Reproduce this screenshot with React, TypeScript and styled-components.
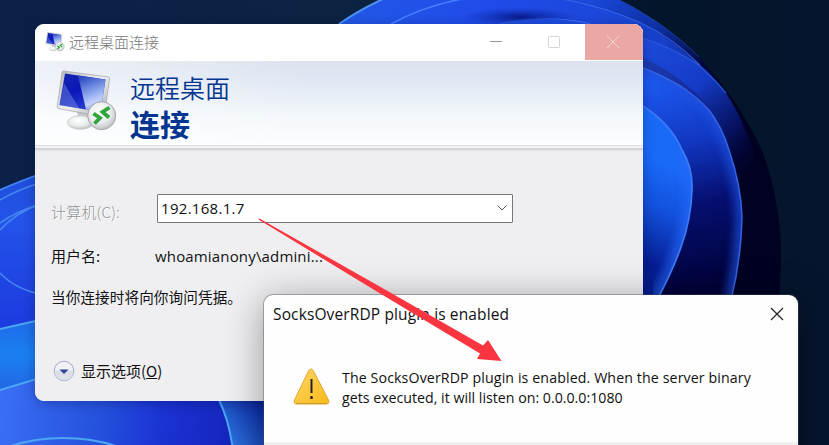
import React from "react";
import styled, { createGlobalStyle } from "styled-components";

const Global = createGlobalStyle`
  html, body { margin: 0; padding: 0; overflow: hidden; }
  * { box-sizing: border-box; }
`;

const latin = `"Open Sans", "Noto Sans CJK SC", sans-serif`;
const cjk = `"Noto Sans CJK SC", "Open Sans", sans-serif`;

const Desktop = styled.main`
  position: relative;
  width: 829px;
  height: 445px;
  overflow: hidden;
  background: #06172e;
  font-family: ${cjk};
`;

const Wallpaper = styled.svg`
  position: absolute;
  inset: 0;
  display: block;
`;

const RdpWindow = styled.section`
  position: absolute;
  left: 35px;
  top: 24px;
  width: 608px;
  height: 377px;
  border-radius: 9px;
  overflow: hidden;
  background: #efeff1;
  display: flex;
  flex-direction: column;
  box-shadow: 0 2px 12px rgba(0, 10, 50, 0.3);
`;

const TitleBar = styled.header`
  height: 37px;
  flex: none;
  background: #fff;
  display: flex;
  align-items: flex-start;
`;

const TitleIcon = styled.div`
  width: 20px;
  height: 22px;
  margin: 7px 4px 0 10px;
`;

const Title = styled.div`
  flex: 1;
  font-size: 15px;
  font-weight: 300;
  line-height: 35px;
  color: #777;
`;

const CaptionButton = styled.button<{ $danger?: boolean }>`
  width: 58px;
  height: 36px;
  border: 0;
  padding: ${(p) => (p.$danger ? "0 2px 0 0" : "0 4px 0 0")};
  display: grid;
  place-items: center;
  background: ${(p) => (p.$danger ? "#eaa7a3" : "transparent")};
`;

const Banner = styled.div`
  height: 85px;
  flex: none;
  display: flex;
  background: linear-gradient(90deg, rgba(255,255,255,.5), rgba(255,255,255,0) 45%),
    linear-gradient(#dce3ec 0, #dfe6f3 18%, #e9eff6 45%, #f4f8fb 65%, #fbfdfe 100%);
  border-bottom: 1px solid #dcdcde;
`;

const BannerIcon = styled.div`
  margin: 8px 0 0 20px;
  width: 63px;
  height: 65px;
`;

const BannerText = styled.div`
  margin: 9px 0 0 12px;
  color: #043590;
`;

const BannerLine = styled.div<{ $bold?: boolean }>`
  font-size: ${(p) => (p.$bold ? 30 : 25)}px;
  font-weight: ${(p) => (p.$bold ? 700 : 350)};
  line-height: ${(p) => (p.$bold ? 37 : 35)}px;
`;

const Body = styled.div`
  flex: 1;
  padding: 44px 16px 0;
  display: flex;
  flex-direction: column;
  background: linear-gradient(#f4f4f6 0, #f4f4f6 2px, #d0d0d2 2px, #d8d8da 4px, #ececee 5px, #efeff1 6px);
`;

const Row = styled.div<{ $height: number }>`
  height: ${(p) => p.$height}px;
  display: flex;
  align-items: center;
`;

const Label = styled.label<{ $muted?: boolean }>`
  width: ${(p) => (p.$muted ? 106 : 104)}px;
  font-size: 15px;
  font-weight: ${(p) => (p.$muted ? 300 : 400)};
  letter-spacing: ${(p) => (p.$muted ? 0.2 : 0)}px;
  color: ${(p) => (p.$muted ? "#929294" : "#111")};
  text-shadow: ${(p) => (p.$muted ? "1px 1px #fff" : "none")};
  padding-top: ${(p) => (p.$muted ? 7 : 0)}px;
`;

const Combo = styled.div`
  width: 356px;
  height: 29px;
  border: 1px solid #77777a;
  border-radius: 1px;
  background: #fff;
  display: flex;
  align-items: center;
  justify-content: space-between;
  padding: 0 5px 0 3px;
  font: 400 15px/27px ${latin};
  letter-spacing: 0.3px;
  color: #111;
`;

const UserName = styled.span`
  font: 400 15px/22px ${latin};
  letter-spacing: 0.16px;
  color: #111;
`;

const Notice = styled.div`
  margin-top: 1px;
  font-size: 14.6px;
  line-height: 22px;
  letter-spacing: 0.1px;
  color: #111;
`;

const Options = styled.div`
  margin: 52px 0 0 2px;
  display: flex;
  align-items: center;
  gap: 6px;
  font-size: 15px;
  line-height: 22px;
  letter-spacing: 0;
  color: #111;
  svg { flex: none; }
`;

const Popup = styled.section`
  position: absolute;
  left: 264px;
  top: 295px;
  width: 534px;
  height: 180px;
  border-radius: 9px;
  background: #fefefe;
  font-family: ${latin};
  color: #111;
  box-shadow: 0 0 0 1px rgba(70, 75, 90, 0.4), 0 6px 38px rgba(0, 0, 0, 0.38);
`;

const PopupHeader = styled.header`
  height: 37px;
  margin-bottom: 1px;
  display: flex;
  align-items: center;
  justify-content: space-between;
  padding: 0 14px 0 9px;
  font-size: 15.5px;
  letter-spacing: 0.13px;
`;

const Message = styled.div`
  height: 109px;
  padding: 34px 0 0 29px;
  display: flex;
  gap: 11px;
`;

const MessageText = styled.p`
  margin: 1px 0 0;
  font-size: 14.2px;
  line-height: 20px;
  white-space: nowrap;
`;

const TextLine = styled.span<{ $spacing: number }>`
  display: block;
  letter-spacing: ${(p) => p.$spacing}px;
`;

const PopupFooter = styled.footer`
  height: 33px;
  border-radius: 0 0 9px 9px;
  background: #f0f0f1;
`;

const ArrowOverlay = styled.svg`
  position: absolute;
  left: 256px;
  top: 216px;
`;

function RdpIcon({ id, width, height }: { id: string; width: number; height: number }) {
  return (
    <svg width={width} height={height} viewBox="0 0 63 65">
      <defs>
        <linearGradient id={`${id}s`} x1="0" y1="0" x2=".5" y2="1">
          <stop stopColor="#1626b0" /><stop offset=".5" stopColor="#0a17b8" /><stop offset="1" stopColor="#2a3fd0" />
        </linearGradient>
        <linearGradient id={`${id}g`} x1=".3" y1="0" x2=".6" y2="1">
          <stop stopColor="#2c49c4" /><stop offset=".5" stopColor="#8ea8ee" /><stop offset=".75" stopColor="#c3d2fa" /><stop offset="1" stopColor="#6d8ae6" />
        </linearGradient>
        <linearGradient id={`${id}f`} x1="0" y1="0" x2="1" y2="1">
          <stop stopColor="#b4b5b8" /><stop offset=".5" stopColor="#f0f0f1" /><stop offset="1" stopColor="#a5a7ab" />
        </linearGradient>
        <radialGradient id={`${id}b`} cx=".42" cy=".35" r=".68">
          <stop stopColor="#fff" /><stop offset=".6" stopColor="#e9eaeb" /><stop offset="1" stopColor="#bcbdbf" />
        </radialGradient>
      </defs>
      <path d="M22 42 36 45 34 53 24 52Z" fill="#c7c8cc" />
      <ellipse cx="25.500" cy="53.500" rx="13" ry="6.800" fill={`url(#${id}b)`} stroke="#c0c1c4" strokeWidth=".7" />
      <path d="M8.500 2 53.500 8Q54.800 8.300 54.600 10L49 48 3 39.500Q2 39 2.300 37.500L7 3.500Q7.300 2 8.500 2Z" fill={`url(#${id}f)`} stroke="#a0a2a8" strokeWidth=".7" />
      <path d="m10 4.500 40.500 6L45.500 43 4.500 36Z" fill={`url(#${id}s)`} />
      <path d="m23 6.400 27.500 4.100L45.500 43 31 40.500Z" fill={`url(#${id}g)`} />
      <path d="m9 14 15 25.300L4.500 36Z" fill="#899de9" opacity=".4" />
      <circle cx="46.700" cy="46.700" r="14" fill={`url(#${id}b)`} stroke="#a3a5a9" />
      <path d="m38.500 44.500 6.500 4.500-5.500 5.500M54.500 38.500l-7 4.500 6.500 5.500" fill="none" stroke="#2fa63c" strokeWidth="3.800" />
    </svg>
  );
}

function Bloom() {
  return (
    <Wallpaper width="829" height="445" viewBox="0 0 829 445">
      <defs>
        <linearGradient id="night" x1="0" y1="0" x2="1" y2="0">
          <stop stopColor="#0b2048" /><stop offset=".4" stopColor="#0c2342" /><stop offset=".8" stopColor="#03152b" /><stop offset="1" stopColor="#06152d" />
        </linearGradient>
        <linearGradient id="outer" gradientUnits="userSpaceOnUse" x1="590" y1="0" x2="706" y2="120">
          <stop stopColor="#1b48d8" /><stop offset=".4" stopColor="#0f2fa4" /><stop offset=".75" stopColor="#03083c" /><stop offset="1" stopColor="#010222" />
        </linearGradient>
        <linearGradient id="second" gradientUnits="userSpaceOnUse" x1="560" y1="0" x2="760" y2="170">
          <stop stopColor="#2050e8" /><stop offset=".4" stopColor="#173fc8" /><stop offset=".8" stopColor="#060f62" /><stop offset="1" stopColor="#01022d" stopOpacity="0" />
        </linearGradient>
        <linearGradient id="third" gradientUnits="userSpaceOnUse" x1="645" y1="40" x2="740" y2="160">
          <stop stopColor="#1d4bdc" /><stop offset=".45" stopColor="#143bc6" /><stop offset="1" stopColor="#03083f" stopOpacity="0" />
        </linearGradient>
        <linearGradient id="fourth" gradientUnits="userSpaceOnUse" x1="645" y1="60" x2="740" y2="160">
          <stop stopColor="#1c3caf" /><stop offset=".5" stopColor="#12289a" /><stop offset="1" stopColor="#020430" stopOpacity="0" />
        </linearGradient>
        <linearGradient id="petal" gradientUnits="userSpaceOnUse" x1="660" y1="80" x2="705" y2="290">
          <stop stopColor="#1d5bf2" /><stop offset=".3" stopColor="#1238c4" /><stop offset=".6" stopColor="#050f70" /><stop offset="1" stopColor="#010238" />
        </linearGradient>
        <linearGradient id="core" gradientUnits="userSpaceOnUse" x1="680" y1="170" x2="640" y2="260">
          <stop stopColor="#1a6af8" /><stop offset=".45" stopColor="#1250dc" /><stop offset="1" stopColor="#061d91" />
        </linearGradient>
        <linearGradient id="crown" gradientUnits="userSpaceOnUse" x1="340" y1="0" x2="640" y2="0">
          <stop stopColor="#2358e6" /><stop offset=".5" stopColor="#204bea" /><stop offset="1" stopColor="#1b46d4" />
        </linearGradient>
        <linearGradient id="left" x1="0" y1="0" x2="0" y2="1">
          <stop stopColor="#1f4fd8" /><stop offset=".3" stopColor="#2453ea" /><stop offset="1" stopColor="#1c3ade" />
        </linearGradient>
        <linearGradient id="band" x1="0" y1="0" x2="0" y2="1">
          <stop stopColor="#1f6ae8" /><stop offset=".5" stopColor="#1a80f2" /><stop offset="1" stopColor="#2467e4" />
        </linearGradient>
        <linearGradient id="bottom" gradientUnits="userSpaceOnUse" x1="0" y1="400" x2="230" y2="420">
          <stop stopColor="#3a6ff4" /><stop offset=".45" stopColor="#2450dc" /><stop offset=".7" stopColor="#1b33d4" /><stop offset="1" stopColor="#1526bd" />
        </linearGradient>
        <linearGradient id="wedge" gradientUnits="userSpaceOnUse" x1="226" y1="435" x2="262" y2="405">
          <stop stopColor="#2a70dc" /><stop offset="1" stopColor="#0d2aa6" />
        </linearGradient>
        <radialGradient id="shade"><stop stopColor="#030f70" /><stop offset="1" stopColor="#0a28ac" stopOpacity="0" /></radialGradient>
        <filter id="soft"><feGaussianBlur stdDeviation="4" /></filter>
        <clipPath id="petalClip"><path d="M643 68C657 73 670 80 682 87Q699 99 709 110Q722 127 729 150Q741 185 742 217Q741 260 731 300H643Z" /></clipPath>
        <clipPath id="coreClip"><path d="M643 106Q671 124 682 150Q693 168 692 190Q691 220 681 247Q673 270 657 300H643Z" /></clipPath>
      </defs>
      <path d="M0 0H829V445H0Z" fill="url(#night)" />
      <path d="M560-4H612Q665 22 699 57Q738 99 762 150Q780 200 781 250Q781 275 779 300H560Z" fill="url(#outer)" />
      <path d="M612-4Q665 22 699 57" fill="none" stroke="#1d469e" strokeWidth="1" opacity=".7" />
      <path d="M339 24Q359 10 385-2H557Q602 6 639 22Q672 39 706 70Q742 105 755 160L720 200 640 100V24Z" fill="url(#second)" />
      <path d="M339 24Q359 10 385-2H557Q602 6 639 22V26H339Z" fill="url(#crown)" />
      <path d="M557-2Q602 6 639 22Q672 37 700 65" fill="none" stroke="#3a70f0" strokeWidth="1.200" opacity=".7" />
      <path d="M339 24Q359 10 385-2" fill="none" stroke="#4b93f2" strokeWidth="2" />
      <path d="M391 24Q424 6 462-1M500 24Q545 14 590 24" fill="none" stroke="#477fff" strokeWidth="1.500" />
      <ellipse cx="520" cy="17" rx="58" ry="10" fill="url(#shade)" opacity=".8" />
      <path d="M500 24Q545 14 590 24Z" fill="#1d4de0" />
      <path d="M643 38Q672 48 696 63Q712 76 726 93Q744 120 755 165L735 180 643 80Z" fill="url(#third)" />
      <path d="M643 38Q672 48 696 63Q712 76 726 93" fill="none" stroke="#2c62e4" strokeWidth="1.200" opacity=".8" />
      <path d="M643 58Q671 70 692 90Q730 120 742 170L700 150 643 80Z" fill="url(#fourth)" />
      <g clipPath="url(#petalClip)">
        <path d="M640 60H750V300H640Z" fill="url(#petal)" />
        <path d="M643 68C657 73 670 80 682 87Q699 99 709 110Q722 127 729 150Q741 185 742 217Q741 260 731 300" fill="none" stroke="#1d50dc" strokeWidth="14" opacity=".7" filter="url(#soft)" />
      </g>
      <path d="M643 68C657 73 670 80 682 87Q699 99 709 110Q722 127 729 150Q741 185 742 217Q741 260 731 300" fill="none" stroke="#3363e4" strokeWidth="1.500" />
      <g clipPath="url(#coreClip)">
        <path d="M640 100H700V300H640Z" fill="url(#core)" />
        <path d="M682 150Q693 168 692 190Q691 220 681 247Q673 270 657 300" fill="none" stroke="#2768f5" strokeWidth="16" opacity=".6" filter="url(#soft)" />
      </g>
      <path d="M643 106Q671 124 682 150Q693 168 692 190Q691 220 681 247Q673 270 657 300" fill="none" stroke="#3b7bf8" strokeWidth="1.700" />
      <path d="M0 189Q18 181 40 174V325L0 330Z" fill="url(#left)" />
      <path d="M0 329 40 320V380L0 390Z" fill="url(#band)" />
      <path d="M0 190Q18 182 40 174M0 200Q17 190 40 183M0 223Q15 212 40 204M0 230Q14 214 40 204M0 273Q15 289 40 294" fill="none" stroke="#4386f2" strokeWidth="1.800" />
      <path d="M0 390 40 378V398H270V445H0Z" fill="url(#bottom)" />
      <path d="M219 400H270V445H233Q229 417 219 400Z" fill="url(#wedge)" />
      <path d="M0 329 40 320M0 390 40 378M8 447Q33 438 63 438Q92 438 116 446M219 400Q229 420 233 450" fill="none" stroke="#4ca6f4" strokeWidth="2" />
    </Wallpaper>
  );
}

export default function App() {
  return (
    <Desktop>
      <Global />
      <Bloom />
      <RdpWindow>
        <TitleBar>
          <TitleIcon><RdpIcon id="small" width={20} height={22} /></TitleIcon>
          <Title>远程桌面连接</Title>
          <CaptionButton><svg width="12" height="12"><path d="M0 5.500H12" stroke="#929298" /></svg></CaptionButton>
          <CaptionButton><svg width="12" height="12"><rect x=".5" y=".5" width="11" height="11" rx="1" fill="none" stroke="#d4d4da" /></svg></CaptionButton>
          <CaptionButton $danger><svg width="14" height="14"><path d="m1 1 12 12M13 1 1 13" stroke="#f6d5d5" /></svg></CaptionButton>
        </TitleBar>
        <Banner>
          <BannerIcon><RdpIcon id="large" width={63} height={65} /></BannerIcon>
          <BannerText><BannerLine>远程桌面</BannerLine><BannerLine $bold>连接</BannerLine></BannerText>
        </Banner>
        <Body>
          <Row $height={36}>
            <Label $muted>计算机(C):</Label>
            <Combo><span>192.168.1.7</span><svg width="10" height="6"><path d="m.5.5 4.500 4.500L9.500.5" fill="none" stroke="#555" /></svg></Combo>
          </Row>
          <Row $height={59}><Label>用户名:</Label><UserName>whoamianony\admini...</UserName></Row>
          <Notice>当你连接时将向你询问凭据。</Notice>
          <Options>
            <svg width="22" height="22"><circle cx="11" cy="11" r="9.800" fill="#f0f1f6" stroke="#a1a6cb" /><path d="M1.500 11Q11 8 20.500 11A9.500 9.500 0 0 1 1.500 11Z" fill="#dcdfe8" /><path d="M6.500 9.500H15.500L11 14Z" fill="#294591" /></svg>
            <span>显示选项(<u>O</u>)</span>
          </Options>
        </Body>
      </RdpWindow>
      <Popup>
        <PopupHeader><span>SocksOverRDP plugin is enabled</span><svg width="14" height="14"><path d="m1 1 12 12M13 1 1 13" stroke="#222" strokeWidth="1.200" /></svg></PopupHeader>
        <Message>
          <svg width="38" height="40" viewBox="0 0 38 40">
            <defs><linearGradient id="warn" x1="0" y1="0" x2="1" y2="1"><stop stopColor="#ffd768" /><stop offset="1" stopColor="#f8b919" /></linearGradient></defs>
            <path d="M15.500 4Q18 0 20.500 4L35.500 33Q37 37 33 37H4Q0 37 1.500 33Z" fill="url(#warn)" stroke="#dfa72c" />
            <path d="M3 36.500H34" stroke="#ca9b2e" /><path d="M18.500 12V26" stroke="#222" strokeWidth="2" /><circle cx="18.500" cy="30.500" r="1.500" fill="#222" />
          </svg>
          <MessageText>
            <TextLine $spacing={0.11}>The SocksOverRDP plugin is enabled. When the server binary</TextLine>
            <TextLine $spacing={0}>gets executed, it will listen on: 0.0.0.0:1080</TextLine>
          </MessageText>
        </Message>
        <PopupFooter />
      </Popup>
      <ArrowOverlay width="248" height="148" viewBox="256 216 248 148">
        <path d="M258.500 219.500 259.500 218.500 385 289.500 483 345.500 488 340 501.500 361 477 359 480 353.500 376 291Z" fill="#fb3540" />
      </ArrowOverlay>
    </Desktop>
  );
}
